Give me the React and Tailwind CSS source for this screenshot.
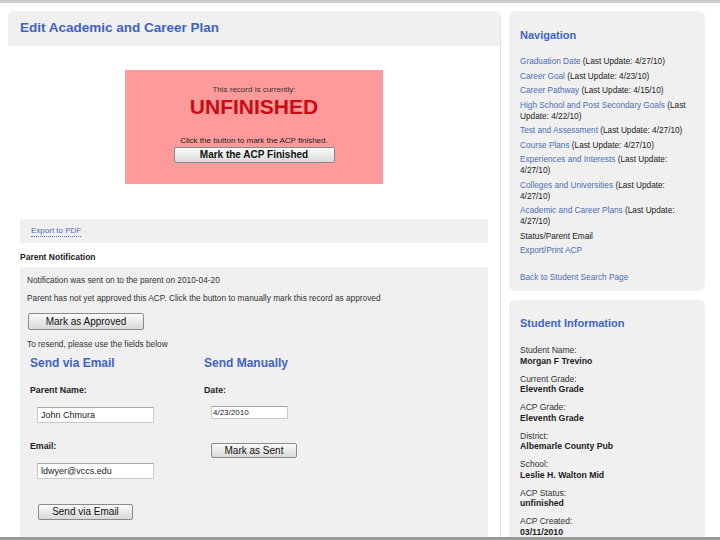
import React from 'react';

const NAV_LINKS = [
  { label: 'Graduation Date', note: ' (Last Update: 4/27/10)' },
  { label: 'Career Goal', note: ' (Last Update: 4/23/10)' },
  { label: 'Career Pathway', note: ' (Last Update: 4/15/10)' },
  { label: 'High School and Post Secondary Goals', note: ' (Last Update: 4/22/10)' },
  { label: 'Test and Assessment', note: ' (Last Update: 4/27/10)' },
  { label: 'Course Plans', note: ' (Last Update: 4/27/10)' },
  { label: 'Experiences and Interests', note: ' (Last Update: 4/27/10)' },
  { label: 'Colleges and Universities', note: ' (Last Update: 4/27/10)' },
  { label: 'Academic and Career Plans', note: ' (Last Update: 4/27/10)' },
];

const STUDENT = [
  ['Student Name:', 'Morgan F Trevino'],
  ['Current Grade:', 'Eleventh Grade'],
  ['ACP Grade:', 'Eleventh Grade'],
  ['District:', 'Albemarle County Pub'],
  ['School:', 'Leslie H. Walton Mid'],
  ['ACP Status:', 'unfinished'],
  ['ACP Created:', '03/11/2010'],
];

export default function App() {
  return (
    <div className="box-border h-[540px] w-[720px] overflow-hidden border-t-[3px] border-b-[3px] border-t-[#cdcdcd] border-b-[#9a9a9a] bg-white font-['Liberation_Sans',Arial,sans-serif] text-[#222]">
      <div className="flex gap-2 pl-2 pt-2">
        {/* MAIN COLUMN */}
        <div className="w-[493px] shrink-0 rounded-t-md border-r border-[#e2e2e2] bg-white pb-10">
          <div className="flex h-[35px] items-center rounded-t-md bg-[#f0f0f0] pl-3">
            <h1 className="text-[13.5px] font-bold text-[#4263c4]">Edit Academic and Career Plan</h1>
          </div>

          {/* status box */}
          <div className="mx-auto mt-[24px] flex h-[114px] w-[258px] flex-col items-center bg-[#fe9a9a] pt-[15px]">
            <p className="text-[8px] leading-[10px] text-[#333]">This record is currently:</p>
            <p className="text-[21px] font-bold leading-[23px] text-[#cc0a14]">UNFINISHED</p>
            <p className="mt-[18px] text-[8px] leading-[10px] text-[#222]">Click the button to mark the ACP finished.</p>
            <Button className="mt-[1px] h-[16px] w-[161px] font-bold">Mark the ACP Finished</Button>
          </div>

          {/* export bar */}
          <div className="mx-3 mt-[35px] flex h-[24px] items-center bg-[#f0f0f0] pl-[11px]">
            <a className="border-b border-dotted border-[#4a6fb5] text-[8px] leading-[10px] text-[#4a6fb5]">Export to PDF</a>
          </div>

          <p className="ml-3 mt-[9px] text-[8.5px] font-bold leading-[10px] text-[#222]">Parent Notification</p>

          {/* notification box */}
          <div className="mx-3 mt-[5px] h-[280px] bg-[#f0f0f0] pl-[7px] pt-[8px] text-[8.3px] leading-[10px] text-[#333]">
            <p>Notification was sent on to the parent on 2010-04-20</p>
            <p className="mt-[8px]">Parent has not yet approved this ACP. Click the button to manually mark this record as approved</p>
            <Button className="ml-[1px] mt-[10px] h-[17px] w-[116px]">Mark as Approved</Button>
            <p className="mt-[9px]">To resend, please use the fields below</p>

            <div className="flex pl-[3px]">
              {/* send via email */}
              <div className="w-[174px]">
                <h2 className="mt-[7px] text-[12px] font-bold leading-[14px] text-[#4263c4]">Send via Email</h2>
                <p className="mt-[15px] text-[8.8px] font-bold text-[#222]">Parent Name:</p>
                <Input className="ml-[7px] mt-[12px] h-[16px] w-[117px]" value="John Chmura" />
                <p className="mt-[18px] text-[8.8px] font-bold text-[#222]">Email:</p>
                <Input className="ml-[7px] mt-[12px] h-[16px] w-[117px]" value="ldwyer@vccs.edu" />
                <Button className="ml-[8px] mt-[25px] h-[16px] w-[95px]">Send via Email</Button>
              </div>

              {/* send manually */}
              <div>
                <h2 className="mt-[7px] text-[12px] font-bold leading-[14px] text-[#4263c4]">Send Manually</h2>
                <p className="mt-[15px] text-[8.8px] font-bold text-[#222]">Date:</p>
                <Input className="ml-[7px] mt-[11px] h-[13px] w-[77px] !pl-[1px] !text-[8px]" value="4/23/2010" />
                <Button className="ml-[7px] mt-[24px] h-[15px] w-[86px]">Mark as Sent</Button>
              </div>
            </div>
          </div>
        </div>

        {/* SIDEBAR */}
        <div className="flex w-[196px] shrink-0 flex-col gap-[9px]">
          <div className="h-[280px] rounded-md bg-[#f0f0f0] pl-[11px] pr-[15px] pt-[18px]">
            <h3 className="text-[11px] font-bold leading-[13px] text-[#4263c4]">Navigation</h3>
            <ul className="mt-[14px] flex flex-col gap-[3.5px] text-[8.25px] leading-[11px]">
              {NAV_LINKS.map((l) => (
                <li key={l.label}>
                  <a className="text-[#4a6fb5]">{l.label}</a>
                  <span className="text-[#222]">{l.note}</span>
                </li>
              ))}
              <li className="text-[#222]">Status/Parent Email</li>
              <li className="text-[#4a6fb5]">Export/Print ACP</li>
              <li className="mt-[12px] text-[#4a6fb5]">Back to Student Search Page</li>
            </ul>
          </div>

          <div className="h-[260px] rounded-t-md bg-[#f0f0f0] pl-[11px] pt-[17px]">
            <h3 className="text-[11px] font-bold leading-[13px] text-[#4263c4]">Student Information</h3>
            <div className="mt-[15px] flex flex-col gap-[7.5px] leading-[10.5px]">
              {STUDENT.map(([label, value]) => (
                <div key={label}>
                  <p className="text-[8.5px] text-[#333]">{label}</p>
                  <p className="text-[8.7px] font-bold text-[#222]">{value}</p>
                </div>
              ))}
            </div>
          </div>
        </div>
      </div>
    </div>
  );
}

function Button({ children, className = '' }) {
  return (
    <button
      className={`block rounded-[2px] border border-[#8a8a8a] bg-gradient-to-b from-[#fbfbfb] to-[#d9d9d9] text-[10px] leading-none text-[#111] ${className}`}
    >
      {children}
    </button>
  );
}

function Input({ value, className = '' }) {
  return (
    <input
      type="text"
      defaultValue={value}
      className={`block border border-[#c9c9c9] border-t-[#a8a8a8] bg-white pl-[3px] text-[9px] text-[#222] outline-none ${className}`}
    />
  );
}
